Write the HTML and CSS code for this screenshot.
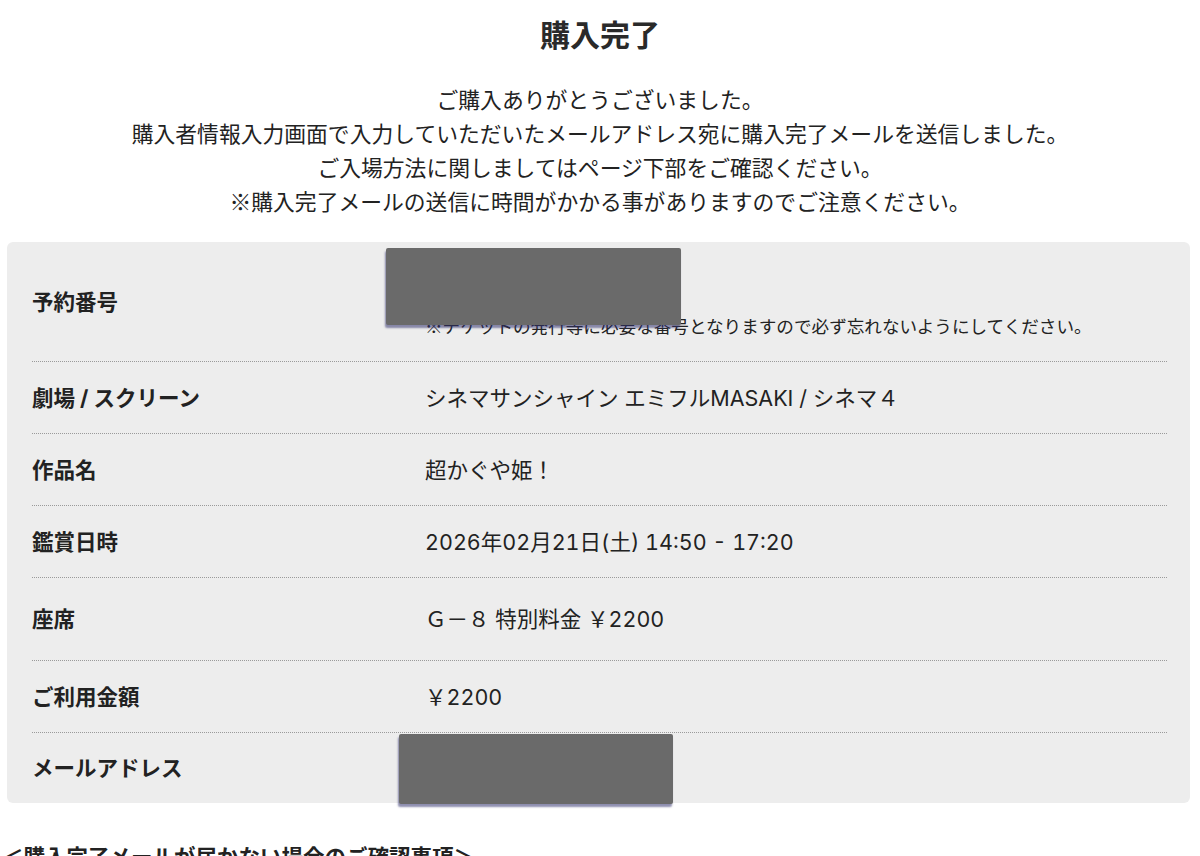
FILE: index.html
```html
<!DOCTYPE html>
<html lang="ja">
<head>
    <meta charset="UTF-8">
    <meta name="viewport" content="width=device-width, initial-scale=1.0">
    <title>購入完了</title>
    <link rel="stylesheet" href="styles.css">
</head>
<body>
    <h1 class="page-title">購入完了</h1>
    <div class="intro">
        <p>ご購入ありがとうございました。</p>
        <p>購入者情報入力画面で入力していただいたメールアドレス宛に購入完了メールを送信しました。</p>
        <p>ご入場方法に関しましてはページ下部をご確認ください。</p>
        <p>※購入完了メールの送信に時間がかかる事がありますのでご注意ください。</p>
    </div>

    <div class="summary">
        <div class="row row-number">
            <div class="label">予約番号</div>
            <div class="value">
                <div class="number"><span class="mask mask-number"></span></div>
                <div class="note">※チケットの発行等に必要な番号となりますので必ず忘れないようにしてください。</div>
            </div>
        </div>
        <div class="row">
            <div class="label">劇場 / スクリーン</div>
            <div class="value">シネマサンシャイン エミフルMASAKI / シネマ４</div>
        </div>
        <div class="row">
            <div class="label">作品名</div>
            <div class="value">超かぐや姫！</div>
        </div>
        <div class="row">
            <div class="label">鑑賞日時</div>
            <div class="value">2026年02月21日(土) 14:50 - 17:20</div>
        </div>
        <div class="row row-seat">
            <div class="label">座席</div>
            <div class="value">Ｇ－８ 特別料金 ￥2200</div>
        </div>
        <div class="row">
            <div class="label">ご利用金額</div>
            <div class="value">￥2200</div>
        </div>
        <div class="row row-last">
            <div class="label">メールアドレス</div>
            <div class="value"><span class="mask mask-mail"></span></div>
        </div>
    </div>

    <h2 class="sub-title">＜購入完了メールが届かない場合のご確認事項＞</h2>
</body>
</html>
```

FILE: styles.css
```css
body {
    margin: 0;
    background-color: #ffffff;
    color: #222;
    font-family: 'Noto Sans CJK JP', 'Noto Sans', sans-serif;
}

.page-title {
    margin: 0;
    padding-top: 13px;
    font-size: 30px;
    line-height: 40px;
    text-align: center;
    color: #2a2a2a;
}

.intro {
    margin-top: 29px;
    text-align: center;
    font-size: 21.8px;
    line-height: 34px;
}

.intro p {
    margin: 0;
}

.summary {
    margin: 24px 10px 0 7px;
    padding: 0 23px 0 25px;
    background-color: #ededed;
    border-radius: 6px;
}

.row {
    display: grid;
    grid-template-columns: 393px 1fr;
    align-items: center;
    padding: 19px 0 18px;
    border-bottom: 1px dotted #9a9a9a;
    font-size: 21.5px;
    line-height: 34px;
}

.row-number {
    padding: 24px 0 23px;
}

.row-seat {
    padding: 24px 0 24px;
}

.row-last {
    border-bottom: none;
    padding: 18px 0 18px;
}

.label {
    font-family: 'Inter', 'Noto Sans CJK JP', sans-serif;
    font-weight: bold;
    color: #222;
}

.value {
    position: relative;
    min-height: 34px;
    font-family: 'Inter', 'Noto Sans CJK JP', sans-serif;
    font-variant-numeric: tabular-nums;
}

.number {
    position: relative;
    height: 40px;
}

.note {
    margin-top: 8px;
    font-family: 'Noto Sans CJK JP', sans-serif;
    font-size: 17.6px;
    line-height: 24px;
}

.mask {
    position: absolute;
    background-color: #6a6a6a;
    border-radius: 2px;
    box-shadow: -1px 3px 2px rgba(50, 50, 110, 0.55);
}

.mask-number {
    left: -39px;
    top: -18px;
    width: 295px;
    height: 77px;
}

.mask-mail {
    left: -26px;
    top: -17px;
    width: 274px;
    height: 70px;
}

.sub-title {
    margin: 36px 0 0 2px;
    font-size: 21.5px;
    line-height: 34px;
    color: #222;
}
```
